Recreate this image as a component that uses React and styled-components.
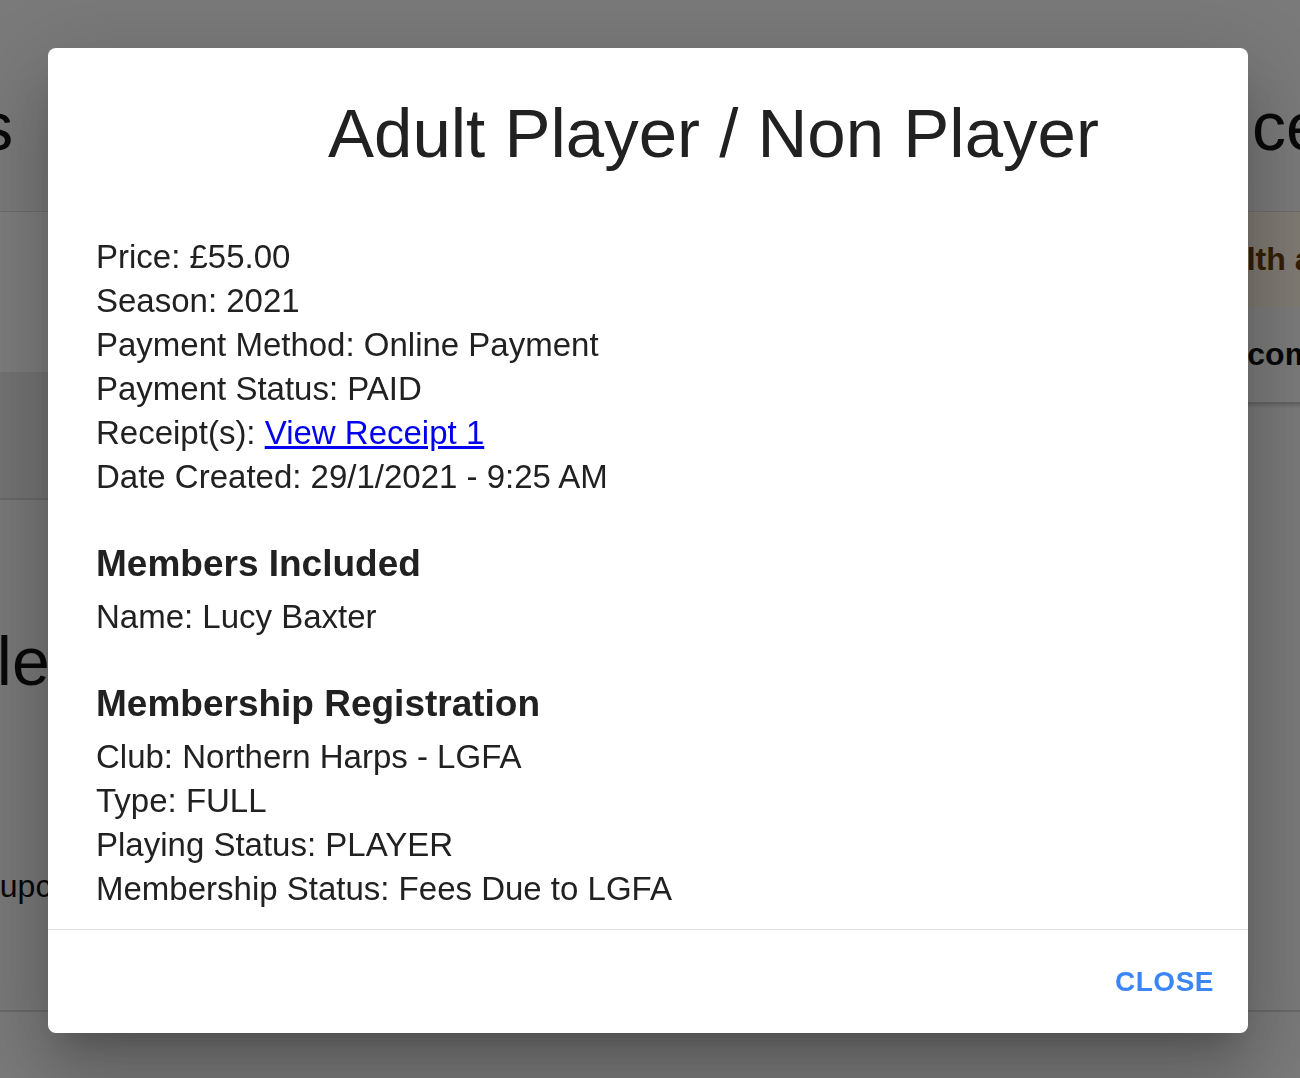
import React from 'react';
import styled, { createGlobalStyle } from 'styled-components';
import { TriangleAlert } from 'lucide-react';

const GlobalStyle = createGlobalStyle`
  html, body {
    margin: 0;
    padding: 0;
    height: 100%;
  }
  body {
    font-family: 'Liberation Sans', Arial, Helvetica, sans-serif;
    color: #212121;
    background: #f4f4f4;
    overflow: hidden;
  }
  * {
    box-sizing: border-box;
  }
`;

const App = () => {
  return (
    <>
      <GlobalStyle />
      <Viewport>
        <Sheet>
          <Columns>
            <LeftCol>
              <PageTitle $indent={13}>Teams</PageTitle>
              <TabBand />
              <FilterBand />
              <Section>
                <SectionTitle>Profile</SectionTitle>
                <EmptyText>No upcoming fixtures</EmptyText>
              </Section>
            </LeftCol>
            <RightCol>
              <PageTitle $indent={28}>Balance</PageTitle>
              <Alert>
                <TriangleAlert size={44} color='#ed6c02' />
                <span>Health and safety</span>
              </Alert>
              <SummaryRow>Welcome back</SummaryRow>
            </RightCol>
          </Columns>
          <PageFooter />
        </Sheet>
      </Viewport>

      <Backdrop>
        <Dialog role='dialog'>
          <DialogTitle>Adult Player / Non Player</DialogTitle>
          <DialogContent>
            <Line>Price: £55.00</Line>
            <Line>Season: 2021</Line>
            <Line>Payment Method: Online Payment</Line>
            <Line>Payment Status: PAID</Line>
            <Line>
              Receipt(s): <ReceiptLink href='#'>View Receipt 1</ReceiptLink>
            </Line>
            <Line>Date Created: 29/1/2021 - 9:25 AM</Line>

            <SubHeading>Members Included</SubHeading>
            <Line>Name: Lucy Baxter</Line>

            <SubHeading>Membership Registration</SubHeading>
            <Line>Club: Northern Harps - LGFA</Line>
            <Line>Type: FULL</Line>
            <Line>Playing Status: PLAYER</Line>
            <Line>Membership Status: Fees Due to LGFA</Line>
          </DialogContent>
          <DialogActions>
            <TextButton>Close</TextButton>
          </DialogActions>
        </Dialog>
      </Backdrop>
    </>
  );
};
export default App;

/* page behind the dialog */

const Viewport = styled.div`
  height: 100vh;
  display: flex;
  justify-content: center;
  overflow: hidden;
`;

const Sheet = styled.div`
  flex: 0 0 1700px;
  display: flex;
  flex-direction: column;
`;

const Columns = styled.div`
  height: 1010px;
  display: grid;
  grid-template-columns: 1fr 450px;
`;

const LeftCol = styled.div`
  display: flex;
  flex-direction: column;
`;

const RightCol = styled.div`
  display: flex;
  flex-direction: column;
`;

const PageTitle = styled.h1`
  height: 212px;
  margin: 0;
  padding: 86px 0 0 ${(p) => p.$indent}px;
  font-size: 68px;
  line-height: 80px;
  font-weight: 400;
  color: #111;
  white-space: nowrap;
  border-bottom: 1px solid #dadada;
`;

const TabBand = styled.div`
  height: 160px;
  background: #fafafa;
`;

const FilterBand = styled.div`
  height: 128px;
  background: #e8e8e8;
  border-bottom: 2px solid #d2d2d2;
`;

const Section = styled.div`
  flex: 1;
  padding: 121px 0 0 57px;
  background: #f2f2f2;
`;

const SectionTitle = styled.h2`
  margin: 0;
  font-size: 68px;
  line-height: 80px;
  font-weight: 400;
  color: #111;
  white-space: nowrap;
`;

const EmptyText = styled.p`
  margin: 163px 0 0 93px;
  font-size: 32px;
  line-height: 44px;
  color: #111;
  white-space: nowrap;
`;

const Alert = styled.div`
  height: 95px;
  display: flex;
  align-items: center;
  gap: 24px;
  padding-left: 70px;
  background: #fff4e5;
  color: #663c00;
  font-size: 32px;
  font-weight: 700;
  white-space: nowrap;
`;

const SummaryRow = styled.div`
  height: 97px;
  display: flex;
  align-items: center;
  padding-left: 141px;
  background: #f7f7f7;
  font-size: 32px;
  font-weight: 700;
  color: #111;
  white-space: nowrap;
  border-bottom: 2px solid #c8c8c8;
  box-shadow: 0 2px 3px rgba(0, 0, 0, 0.15);
`;

const PageFooter = styled.div`
  flex: 1;
  border-top: 2px solid #d2d2d2;
  background: #f4f4f4;
`;

/* dialog */

const Backdrop = styled.div`
  position: fixed;
  inset: 0;
  display: flex;
  align-items: flex-start;
  padding: 48px 0 0 48px;
  background: rgba(0, 0, 0, 0.5);
`;

const Dialog = styled.div`
  width: 1200px;
  height: 985px;
  display: flex;
  flex-direction: column;
  background: #fff;
  border-radius: 8px;
  overflow: hidden;
  box-shadow: 0 22px 30px -14px rgba(0, 0, 0, 0.2),
    0 48px 76px 6px rgba(0, 0, 0, 0.14), 0 18px 92px 16px rgba(0, 0, 0, 0.12);
`;

const DialogTitle = styled.h2`
  margin: 0;
  padding: 46px 48px 0 280px;
  font-size: 69px;
  line-height: 80px;
  font-weight: 400;
  color: #212121;
`;

const DialogContent = styled.div`
  flex: 1;
  overflow: hidden;
  padding: 61px 48px 18px;
  border-bottom: 1px solid #e0e0e0;
`;

const Line = styled.div`
  font-size: 33px;
  line-height: 44px;
  color: #212121;
`;

const ReceiptLink = styled.a`
  color: #0000ee;
  text-decoration: underline;
`;

const SubHeading = styled.h3`
  margin: 43px 0 9px;
  font-size: 37px;
  line-height: 44px;
  font-weight: 700;
  color: #212121;
`;

const DialogActions = styled.div`
  height: 103px;
  display: flex;
  justify-content: flex-end;
  align-items: center;
  padding-right: 34px;
`;

const TextButton = styled.button`
  padding: 0;
  border: none;
  background: none;
  font-family: inherit;
  font-size: 28px;
  font-weight: 700;
  letter-spacing: 0.5px;
  text-transform: uppercase;
  color: #3b85f5;
  cursor: pointer;
`;
